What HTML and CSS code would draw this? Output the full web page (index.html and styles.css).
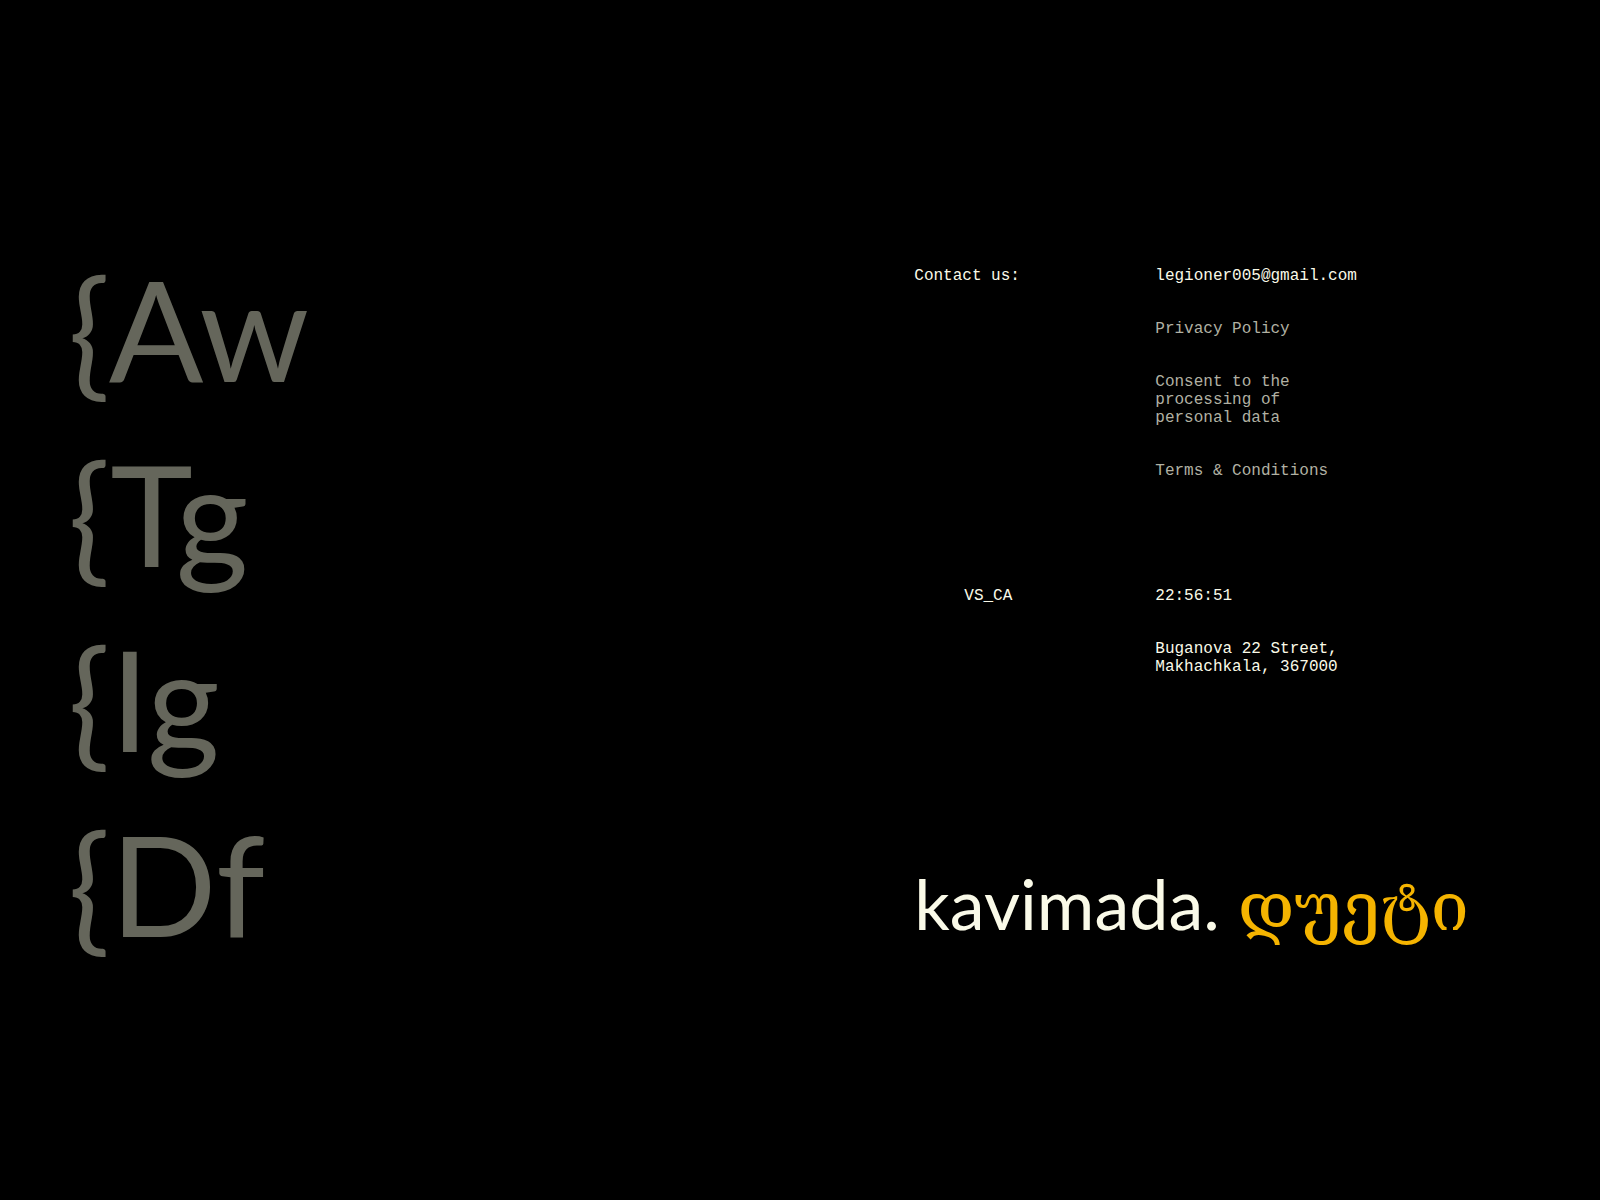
FILE: index.html
```html
<!DOCTYPE html>
<html lang="en">
<head>
    <meta charset="UTF-8">
    <meta name="viewport" content="width=device-width, initial-scale=1.0">
    <title>kavimada. დუეტი</title>
    <link rel="stylesheet" href="styles.css">
</head>
<body>
    <main class="page">
        <nav class="menu">
            <a href="#aw">{Aw</a>
            <a href="#tg">{Tg</a>
            <a href="#ig">{Ig</a>
            <a href="#df">{Df</a>
        </nav>
        <div class="info">
            <section class="row">
                <p class="label">Contact us:</p>
                <div class="details">
                    <a class="mail" href="mailto:legioner005@gmail.com">legioner005@gmail.com</a>
                    <a href="#privacy">Privacy Policy</a>
                    <a href="#consent">Consent to the processing of personal data</a>
                    <a href="#terms">Terms &amp; Conditions</a>
                </div>
            </section>
            <section class="row">
                <p class="label indent">VS_CA</p>
                <div class="details">
                    <time>22:56:51</time>
                    <address>Buganova 22 Street, Makhachkala, 367000</address>
                </div>
            </section>
            <h1 class="logo">kavimada. <span lang="ka">დუეტი</span></h1>
        </div>
    </main>
</body>
</html>
```

FILE: styles.css
```css
* {
    box-sizing: border-box;
    margin: 0;
    padding: 0;
}
body {
    background: #000;
    color: #fafae8;
    font-family: "Liberation Mono", monospace;
    font-size: 16px;
    line-height: 18px;
}
a {
    color: #b1b1a3;
    text-decoration: none;
}
.page {
    display: grid;
    grid-template-columns: 4fr 3fr;
    align-content: center;
    min-height: 100vh;
    padding-top: 12px;
}
.menu {
    display: flex;
    flex-direction: column;
    align-items: flex-start;
    padding-left: 68px;
}
.menu a {
    color: #65665b;
    font-family: Lato, sans-serif;
    font-size: 140px;
    line-height: 185px;
}
.info {
    display: flex;
    flex-direction: column;
    gap: 107px;
    padding-top: 31px;
}
.row {
    display: grid;
    grid-template-columns: 241px 200px;
}
.indent {
    padding-left: 50px;
}
.details {
    display: flex;
    flex-direction: column;
    align-items: flex-start;
    gap: 35px;
}
.details .mail {
    color: #fafae8;
    white-space: nowrap;
}
address {
    font-style: normal;
}
.logo {
    font-family: Lato, sans-serif;
    font-size: 70px;
    font-weight: 400;
    line-height: 80px;
    margin-top: 80px;
    white-space: nowrap;
}
.logo span {
    color: #f5b400;
    font-family: "DejaVu Serif", serif;
    font-size: 68px;
}
```
